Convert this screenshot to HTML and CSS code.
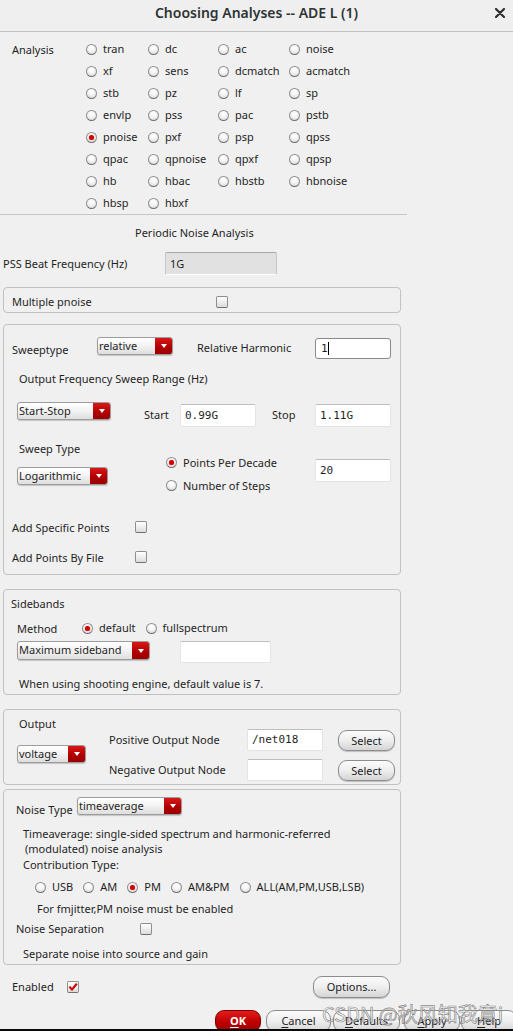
FILE: index.html
```html
<!DOCTYPE html>
<html lang="en">
<head>
<meta charset="utf-8">
<title>Choosing Analyses -- ADE L (1)</title>
<link rel="stylesheet" href="styles.css">
</head>
<body>
<header class="titlebar">
  <span></span>
  <span class="title">Choosing Analyses -- ADE L (1)</span>
  <span class="close"><svg width="10" height="10" viewBox="0 0 10 10"><path d="M1 1L9 9M9 1L1 9" stroke="#2e2e2e" stroke-width="2.2" stroke-linecap="round"/></svg></span>
</header>

<section class="analysis">
  <div class="analysis-label">Analysis</div>
  <div class="agrid">
    <div class="opt"><span class="radio"></span>tran</div>
    <div class="opt"><span class="radio"></span>dc</div>
    <div class="opt"><span class="radio"></span>ac</div>
    <div class="opt"><span class="radio"></span>noise</div>
    <div class="opt"><span class="radio"></span>xf</div>
    <div class="opt"><span class="radio"></span>sens</div>
    <div class="opt"><span class="radio"></span>dcmatch</div>
    <div class="opt"><span class="radio"></span>acmatch</div>
    <div class="opt"><span class="radio"></span>stb</div>
    <div class="opt"><span class="radio"></span>pz</div>
    <div class="opt"><span class="radio"></span>lf</div>
    <div class="opt"><span class="radio"></span>sp</div>
    <div class="opt"><span class="radio"></span>envlp</div>
    <div class="opt"><span class="radio"></span>pss</div>
    <div class="opt"><span class="radio"></span>pac</div>
    <div class="opt"><span class="radio"></span>pstb</div>
    <div class="opt"><span class="radio on"></span>pnoise</div>
    <div class="opt"><span class="radio"></span>pxf</div>
    <div class="opt"><span class="radio"></span>psp</div>
    <div class="opt"><span class="radio"></span>qpss</div>
    <div class="opt"><span class="radio"></span>qpac</div>
    <div class="opt"><span class="radio"></span>qpnoise</div>
    <div class="opt"><span class="radio"></span>qpxf</div>
    <div class="opt"><span class="radio"></span>qpsp</div>
    <div class="opt"><span class="radio"></span>hb</div>
    <div class="opt"><span class="radio"></span>hbac</div>
    <div class="opt"><span class="radio"></span>hbstb</div>
    <div class="opt"><span class="radio"></span>hbnoise</div>
    <div class="opt"><span class="radio"></span>hbsp</div>
    <div class="opt"><span class="radio"></span>hbxf</div>
  </div>
</section>
<div class="sep"></div>

<div class="heading">Periodic Noise Analysis</div>
<div class="pss-row">
  <span class="pss-label">PSS Beat Frequency (Hz)</span>
  <span class="field disabled">1G</span>
</div>

<div class="frame multi">
  <span class="multi-label">Multiple pnoise</span>
  <span class="check"></span>
</div>

<div class="frame sweep">
  <div class="r1">
    <span class="sw-label">Sweeptype</span>
    <span class="dd dd-rel"><span class="dd-text">relative</span><span class="dd-arrow"></span></span>
    <span class="rh-label">Relative Harmonic</span>
    <span class="field mono focus w76">1<span class="caret"></span></span>
  </div>
  <div class="r2">Output Frequency Sweep Range (Hz)</div>
  <div class="r3">
    <span class="dd dd-ss"><span class="dd-text">Start-Stop</span><span class="dd-arrow"></span></span>
    <span class="start-label">Start</span>
    <span class="field mono w76 tall">0.99G</span>
    <span class="stop-label">Stop</span>
    <span class="field mono w76 tall">1.11G</span>
  </div>
  <div class="r45">
    <div class="st-col">
      <div class="st-label">Sweep Type</div>
      <span class="dd dd-log"><span class="dd-text">Logarithmic</span><span class="dd-arrow"></span></span>
    </div>
    <div class="st-radios">
      <div class="opt"><span class="radio on"></span>Points Per Decade</div>
      <div class="opt opt23"><span class="radio"></span>Number of Steps</div>
    </div>
    <span class="field mono w76 tall ppd">20</span>
  </div>
  <div class="chkrow first"><span class="chk-label">Add Specific Points</span><span class="check"></span></div>
  <div class="chkrow"><span class="chk-label">Add Points By File</span><span class="check"></span></div>
</div>

<div class="frame sidebands">
  <div class="sb-title">Sidebands</div>
  <div class="method-row">
    <span class="method-label">Method</span>
    <div class="opt"><span class="radio on"></span>default</div>
    <div class="opt"><span class="radio"></span>fullspectrum</div>
  </div>
  <div class="msb-row">
    <span class="dd dd-msb"><span class="dd-text">Maximum sideband</span><span class="dd-arrow"></span></span>
    <span class="field w91"></span>
  </div>
  <div class="sb-note">When using shooting engine, default value is 7.</div>
</div>

<div class="frame output">
  <div class="out-col">
    <div class="out-label">Output</div>
    <span class="dd dd-volt"><span class="dd-text">voltage</span><span class="dd-arrow"></span></span>
  </div>
  <div class="out-grid">
    <span class="node-label">Positive Output Node</span>
    <span class="field mono w76 h22">/net018</span>
    <span class="btn">Select</span>
    <span class="node-label">Negative Output Node</span>
    <span class="field mono w76 h22"></span>
    <span class="btn">Select</span>
  </div>
</div>

<div class="frame noise">
  <div class="nt-row">
    <span class="nt-label">Noise Type</span>
    <span class="dd dd-ta"><span class="dd-text">timeaverage</span><span class="dd-arrow"></span></span>
  </div>
  <div class="desc1">Timeaverage: single-sided spectrum and harmonic-referred</div>
  <div class="desc2">(modulated) noise analysis</div>
  <div class="ct-label">Contribution Type:</div>
  <div class="ct-row">
    <div class="opt"><span class="radio"></span>USB</div>
    <div class="opt"><span class="radio"></span>AM</div>
    <div class="opt"><span class="radio on"></span>PM</div>
    <div class="opt"><span class="radio"></span>AM&amp;PM</div>
    <div class="opt"><span class="radio"></span>ALL(AM,PM,USB,LSB)</div>
  </div>
  <div class="fm-note">For fmjitter,PM noise must be enabled</div>
  <div class="ns-row"><span class="ns-label">Noise Separation</span><span class="check"></span></div>
  <div class="ns-note">Separate noise into source and gain</div>
</div>

<div class="enabled-row">
  <span class="en-label">Enabled</span>
  <span class="check checked"><svg width="10" height="10" viewBox="0 0 10 10"><path d="M1.5 4.6L4 7.6L8.8 1.6" fill="none" stroke="#d40000" stroke-width="2.2" stroke-linejoin="round"/></svg></span>
  <span class="btn btn-options">Options...</span>
</div>

<div class="btn-row">
  <span class="btn btn-ok"><u>O</u>K</span>
  <span class="btn btn-cancel"><u>C</u>ancel</span>
  <span class="btn btn-defaults"><u>D</u>efaults</span>
  <span class="btn btn-apply"><u>A</u>pply</span>
  <span class="btn btn-help"><u>H</u>elp</span>
</div>
<div class="edge"></div>

<div class="watermark">CSDN @秋风知我意i</div>
</body>
</html>
```

FILE: styles.css
```css
* { box-sizing: border-box; }
html, body { margin: 0; padding: 0; }
body {
  width: 513px;
  height: 1031px;
  overflow: hidden;
  position: relative;
  background: #f0f0f0;
  font-family: "Noto Sans", "Open Sans", sans-serif;
  font-size: 11px;
  line-height: 16px;
  color: #1f1f1f;
}

/* title bar */
.titlebar {
  height: 32px;
  display: grid;
  grid-template-columns: 1fr auto 1fr;
  align-items: start;
  border-bottom: 1px solid #c2c2c2;
  background: #efefef;
}
.title {
  padding-top: 4px;
  font-size: 14px;
  line-height: 18px;
  font-weight: 600;
  color: #2e3436;
}
.close {
  justify-self: end;
  margin: 8px 8px 0 0;
  width: 10px;
  height: 10px;
  display: flex;
}

/* radio / check */
.opt {
  display: flex;
  align-items: center;
  height: 22px;
  white-space: nowrap;
}
.radio {
  flex: none;
  width: 11px;
  height: 11px;
  margin-right: 6px;
  border-radius: 50%;
  border: 1px solid #8f8f8f;
  border-bottom-color: #6f6f6f;
  background: radial-gradient(circle at 50% 30%, #ffffff 0, #f6f6f6 40%, #d2d2d2 100%);
  position: relative;
}
.radio.on::after {
  content: "";
  position: absolute;
  left: 2px;
  top: 2px;
  width: 5px;
  height: 5px;
  border-radius: 50%;
  background: #d40000;
  box-shadow: 0 0 1px #ff5050;
}
.check {
  flex: none;
  width: 12px;
  height: 12px;
  border: 1px solid #8e8e8e;
  border-bottom-color: #707070;
  border-radius: 2px;
  background: linear-gradient(#ffffff, #dcdcdc);
  display: flex;
  align-items: center;
  justify-content: center;
}

/* fields */
.field {
  display: flex;
  align-items: center;
  height: 21px;
  padding-left: 4px;
  background: #ffffff;
  border: 1px solid #e4e4e4;
  border-top-color: #bdbdbd;
  border-radius: 2px;
  white-space: nowrap;
}
.mono { font-family: "DejaVu Sans Mono", "Liberation Mono", monospace; font-size: 11px; }
.w76 { width: 76px; }
.w91 { width: 91px; }
.tall { height: 23px; }
.h22 { height: 22px; }
.field.disabled {
  width: 112px;
  height: 23px;
  background: #e1e1e1;
  border: 1px solid #c6c6c6;
  border-top-color: #a9a9a9;
  border-bottom-color: #ffffff;
}
.field.focus {
  border: 1px solid #8a8a8a;
  border-radius: 3px;
  padding-left: 5px;
}
.caret {
  display: inline-block;
  width: 1px;
  height: 13px;
  background: #000;
  margin-left: 0;
}

/* dropdown */
.dd {
  display: inline-flex;
  height: 18px;
  border: 1px solid #9c9c9c;
  border-radius: 3px;
  background: linear-gradient(#ffffff, #f4f4f4 45%, #dedede);
  box-shadow: 0 1px 1px rgba(0, 0, 0, 0.18);
  overflow: hidden;
  flex: none;
}
.dd-text {
  flex: 1;
  padding-left: 1px;
  line-height: 15px;
  white-space: nowrap;
}
.dd-arrow {
  flex: none;
  width: 17px;
  background: linear-gradient(#d81818, #b00000 60%, #9a0000);
  display: flex;
  align-items: center;
  justify-content: center;
}
.dd-arrow::before {
  content: "";
  width: 0;
  height: 0;
  border-left: 3.5px solid transparent;
  border-right: 3.5px solid transparent;
  border-top: 4px solid #ffffff;
}

/* buttons */
.btn {
  display: inline-flex;
  align-items: center;
  justify-content: center;
  height: 21px;
  border: 1px solid #8d8d8d;
  border-radius: 9px;
  background: linear-gradient(#fbfbfb, #eeeeee 50%, #d5d5d5);
  box-shadow: 0 1px 1px rgba(0, 0, 0, 0.2);
  color: #222;
  white-space: nowrap;
}
.btn u { text-decoration-thickness: 1px; text-underline-offset: 2px; }

/* analysis */
.analysis {
  display: flex;
  padding: 6px 0 0 12px;
  height: 182px;
}
.analysis-label {
  width: 74px;
  height: 22px;
  display: flex;
  align-items: center;
  padding-top: 2px;
}
.agrid {
  display: grid;
  grid-template-columns: 62px 70px 71px 80px;
  grid-auto-rows: 22px;
}
.sep {
  width: 407px;
  height: 1px;
  background: #c6c6c6;
}
.heading {
  padding: 10px 0 0 135px;
  height: 34px;
  line-height: 15px;
}
.pss-row {
  margin-top: 3px;
  display: flex;
  align-items: center;
  height: 23px;
  padding-left: 3px;
}
.pss-label { width: 162px; }

/* frames */
.frame {
  margin-left: 3px;
  width: 398px;
  border: 1px solid #c1c1c1;
  border-radius: 4px;
  padding-left: 8px;
}
.multi {
  margin-top: 12px;
  height: 26px;
  padding-top: 3px;
  display: flex;
  align-items: center;
}
.multi-label { width: 204px; }

.sweep {
  margin-top: 11px;
  height: 251px;
  padding-top: 12px;
}
.r1 { display: flex; height: 22px; }
.sw-label { width: 85px; margin-top: 5px; }
.dd-rel { width: 76px; }
.rh-label { margin-left: 24px; width: 118px; margin-top: 3px; }
.r1 .field { margin-top: 1px; }
.r2 { margin-top: 11px; height: 18px; line-height: 18px; padding-left: 7px; }
.r3 {
  margin-top: 14px;
  height: 25px;
  display: flex;
  align-items: center;
  padding-left: 5px;
}
.dd-ss { width: 94px; align-self: flex-start; }
.start-label { margin-left: 33px; width: 36px; }
.r3 .field { align-self: flex-end; }
.stop-label { margin-left: 16px; width: 43px; padding-top: 1px; }
.r45 { margin-top: 13px; height: 56px; display: flex; }
.st-col { margin-left: 5px; width: 149px; }
.st-label { padding-left: 2px; height: 18px; line-height: 18px; }
.dd-log { width: 91px; margin-top: 9px; }
.st-radios { margin-top: 11px; width: 149px; }
.st-radios .opt { height: 23px; }
.ppd { margin-top: 19px; }
.chkrow { display: flex; align-items: center; height: 22px; margin-top: 8px; }
.chkrow.first { margin-top: 20px; }
.chk-label { width: 123px; padding-top: 1px; }

.sidebands { margin-top: 14px; height: 106px; padding-top: 6px; padding-left: 7px; }
.sb-title { height: 16px; }
.method-row { margin-top: 5px; height: 22px; display: flex; align-items: center; padding-left: 6px; }
.method-label { width: 65px; padding-top: 2px; }
.method-row .opt { margin-right: 10px; }
.msb-row { margin-top: 2px; height: 22px; display: flex; padding-left: 6px; }
.dd-msb { width: 133px; height: 19px; }
.msb-row .field { margin-left: 30px; height: 22px; }
.sb-note { margin-top: 13px; padding-left: 8px; height: 16px; }

.output { margin-top: 14px; height: 76px; display: flex; }
.out-col { margin-left: 5px; width: 92px; }
.out-label { margin-top: 6px; padding-left: 2px; height: 16px; }
.dd-volt { width: 69px; margin-top: 13px; }
.out-grid {
  margin-top: 19px;
  display: grid;
  grid-template-columns: 138px 76px 57px;
  grid-template-rows: 22px 22px;
  column-gap: 0;
  row-gap: 8px;
  align-items: center;
}
.out-grid .btn { margin-left: 15px; width: 57px; align-self: start; margin-top: 1px; }

.noise { margin-top: 4px; height: 176px; padding-top: 7px; padding-left: 12px; }
.nt-row { display: flex; height: 20px; }
.nt-label { width: 61px; margin-top: 5px; }
.dd-ta { width: 105px; }
.desc1 { margin-top: 9px; line-height: 15px; padding-left: 7px; }
.desc2 { line-height: 15px; padding-left: 9px; }
.ct-label { margin-top: 1px; padding-left: 7px; height: 16px; }
.ct-row { margin-top: 3px; display: flex; padding-left: 19px; column-gap: 10px; }
.fm-note { margin-top: 3px; padding-left: 21px; height: 16px; }
.ns-row { margin-top: 2px; height: 20px; display: flex; align-items: center; }
.ns-label { width: 124px; }
.ns-note { margin-top: 7px; padding-left: 7px; height: 16px; }

/* bottom */
.enabled-row {
  margin-top: 11px;
  height: 22px;
  display: flex;
  align-items: center;
  padding-left: 12px;
}
.en-label { width: 55px; }
.check.checked { width: 12px; height: 12px; }
.btn-options { margin-left: 234px; width: 77px; height: 22px; }
.btn-row {
  margin-top: 12px;
  height: 19px;
  overflow: hidden;
  display: flex;
  padding-left: 215px;
  column-gap: 4px;
}
.btn-row .btn { height: 22px; flex: none; }
.btn-ok {
  width: 46px;
  background: linear-gradient(#e41c1c, #c00000 55%, #980000);
  border-color: #7a0000;
  color: #ffffff;
  font-weight: bold;
}
.btn-cancel { width: 65px; margin-left: 1px; }
.btn-defaults { width: 67px; margin-left: -2px; }
.btn-apply { width: 56px; }
.btn-help { width: 56px; margin-left: -3px; }
.edge { height: 2px; background: #0a0a0a; }

.watermark {
  position: absolute;
  left: 322px;
  top: 1001px;
  font-family: "Noto Sans CJK SC", "Noto Sans", sans-serif;
  font-size: 20px;
  line-height: 26px;
  color: rgba(255, 255, 255, 0.55);
  -webkit-text-stroke: 0.7px rgba(110, 110, 110, 0.8);
  white-space: nowrap;
  pointer-events: none;
}
```
